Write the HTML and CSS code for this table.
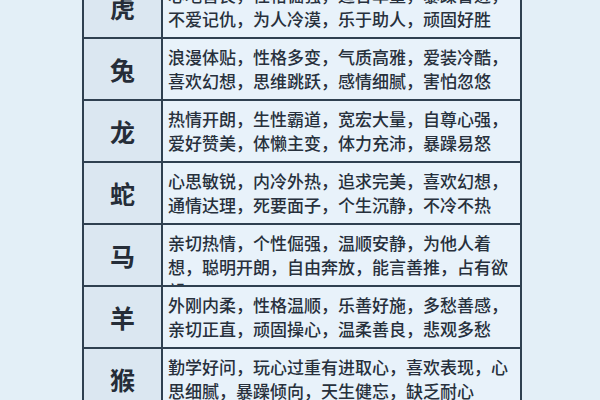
FILE: index.html
```html
<!DOCTYPE html>
<html lang="zh-CN">
<head>
<meta charset="utf-8">
<link rel="stylesheet" href="styles.css">
</head>
<body>
<div class="table">
  <div class="row"><div class="label">虎</div><div class="desc">心地善良，性格倔强，适合单量，暴躁冒进，不爱记仇，为人冷漠，乐于助人，顽固好胜</div></div>
  <div class="row"><div class="label">兔</div><div class="desc">浪漫体贴，性格多变，气质高雅，爱装冷酷，喜欢幻想，思维跳跃，感情细腻，害怕忽悠</div></div>
  <div class="row"><div class="label">龙</div><div class="desc">热情开朗，生性霸道，宽宏大量，自尊心强，爱好赞美，体懒主变，体力充沛，暴躁易怒</div></div>
  <div class="row"><div class="label">蛇</div><div class="desc">心思敏锐，内冷外热，追求完美，喜欢幻想，通情达理，死要面子，个生沉静，不冷不热</div></div>
  <div class="row"><div class="label">马</div><div class="desc">亲切热情，个性倔强，温顺安静，为他人着想，聪明开朗，自由奔放，能言善推，占有欲望</div></div>
  <div class="row"><div class="label">羊</div><div class="desc">外刚内柔，性格温顺，乐善好施，多愁善感，亲切正直，顽固操心，温柔善良，悲观多愁</div></div>
  <div class="row"><div class="label">猴</div><div class="desc">勤学好问，玩心过重有进取心，喜欢表现，心思细腻，暴躁倾向，天生健忘，缺乏耐心</div></div>
</div>
</body>
</html>
```
FILE: styles.css
```css
html, body {
  margin: 0;
  padding: 0;
  background: #e3eff7;
  overflow: hidden;
}
body {
  width: 600px;
  height: 400px;
  font-family: "Noto Sans CJK SC", "Noto Sans", sans-serif;
  color: #27303c;
}
.table {
  margin-top: -23px;
  margin-left: 82px;
  width: 436px;
  border-left: 2px solid #2f4050;
  border-right: 2px solid #2f4050;
  display: flex;
  flex-direction: column;
}
.row {
  display: grid;
  grid-template-columns: 79px 1fr;
  height: 60px;
  border-bottom: 2px solid #2f4050;
}
.label {
  background: #dbe7f1;
  border-right: 2px solid #2f4050;
  display: flex;
  align-items: center;
  justify-content: center;
  font-size: 25px;
  font-weight: 700;
  color: #252d38;
}
.desc {
  background: #e8f2fa;
  padding: 6px 3px 0 5px;
  font-size: 17px;
  line-height: 24px;
  font-weight: 500;
  overflow: hidden;
}
```
